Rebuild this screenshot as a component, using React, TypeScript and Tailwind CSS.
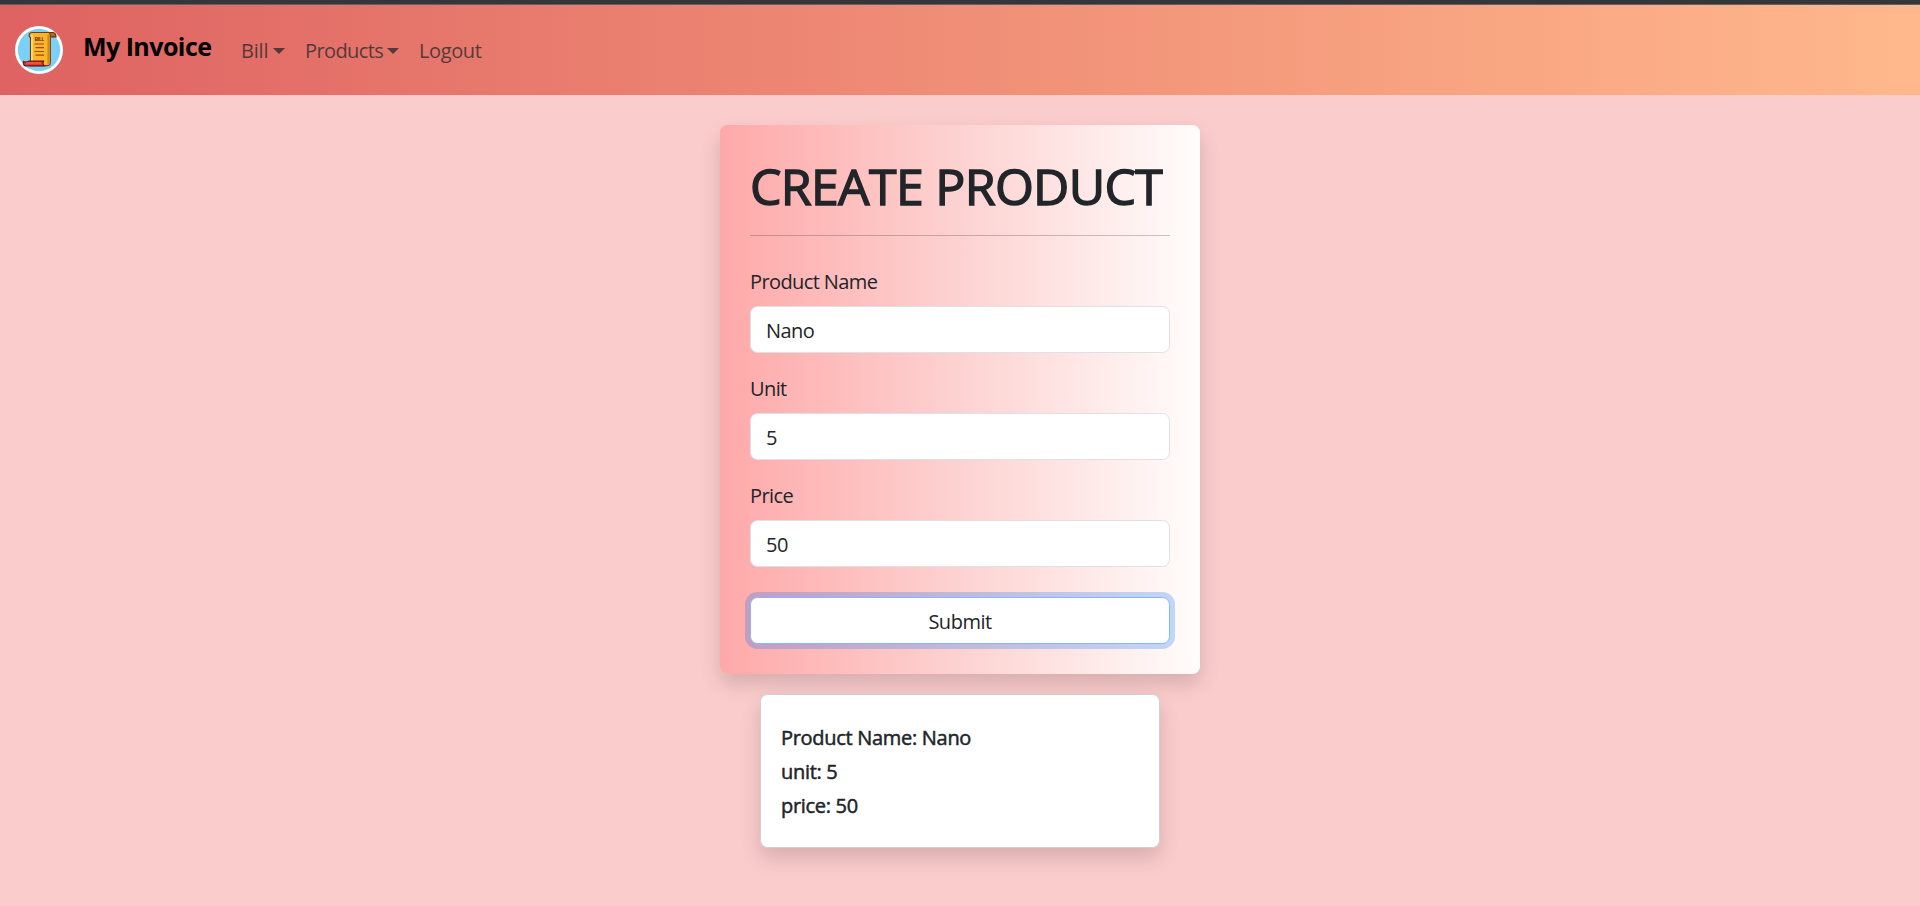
import React from "react";

function Logo() {
  return (
    <svg className="h-12 w-12 shrink-0" viewBox="0 0 48 48">
      <circle cx="24" cy="24" r="24" fill="#ffffff" />
      <circle cx="24" cy="24" r="21.2" fill="#7dd0f5" />
      <path d="M32 6.500H38q3 .4 3 4.300h-6Z" fill="#b06a18" stroke="#6b2a16" strokeWidth="1.200" />
      <path d="M17 6.500h16.500q1.800 0 1.800 3.500V36.500q0 3.200-3 3.200H15.500V11.500q-1.800-.6-1.300-2.800.4-2.200 2.800-2.200Z" fill="#fbb52a" stroke="#7a3a16" strokeWidth="1.200" />
      <path d="M16.200 8.500h1.600v26.500h-1.800Z" fill="#fde07a" />
      <path d="M32.400 8.500h2v27.500q0 2.300-2 2.800Z" fill="#cf8a1c" />
      <path d="M8.500 35.500q2.500 1.300 5.500-.4h14.500q-1.500 2.400.8 4.700H10q-2-1.300-1.500-4.300Z" fill="#e5342f" stroke="#6b1a16" strokeWidth="1.200" />
      <path d="M11 37h15" stroke="#ff6a5b" strokeWidth="1" />
      <text x="24.500" y="14.800" textAnchor="middle" textLength="9.500" className="fill-[#5a2412] font-['Liberation_Sans'] text-[4.500px] leading-none font-bold tracking-normal">BILL</text>
      <path d="M19.500 18h9.500M20.500 21.700h8.500M19.500 25.500h9.500M20.500 29.200h8.500" stroke="#9c4a16" strokeWidth="1.200" />
    </svg>
  );
}

function Caret() {
  return (
    <svg className="h-[6px] w-3" viewBox="0 0 12 6">
      <path d="M0 0h12L6 6Z" fill="currentColor" />
    </svg>
  );
}

function Field({ label, value }: { label: string; value: string }) {
  return (
    <label className="block">
      <span className="block pt-px pb-[9px]">{label}</span>
      <input
        defaultValue={value}
        className="block h-[47px] w-full rounded-[7.5px] border border-[#dee2e6] bg-white px-[15px] pt-0.5 tracking-[-0.55px] outline-none"
      />
    </label>
  );
}

export default function App() {
  return (
    <div className="min-h-[906px] bg-[#fbcccc] font-['Open_Sans','Noto_Sans',sans-serif] text-[20px] leading-[30px] tracking-[-0.6px] text-[#212529]">
      <div className="h-[5px] border-b border-[#5f6164] bg-[#35363a]" />
      <nav className="flex h-[90px] items-center bg-linear-to-r from-[#de6262] to-[#ffb88c] px-[15px]">
        <Logo />
        <a className="mt-[-9px] ml-[20px] w-[158px] text-[25px] font-bold tracking-[-0.55px] whitespace-nowrap text-black">My Invoice</a>
        <div className="flex pt-0.5 text-[#212529]/75">
          <a className="flex w-[64px] items-center gap-[5px] tracking-[-0.2px]">Bill<Caret /></a>
          <a className="flex w-[114px] items-center gap-1">Products<Caret /></a>
          <a className="tracking-[-0.4px]">Logout</a>
        </div>
      </nav>
      <main className="flex flex-col items-center pt-[30px]">
        <form className="w-[480px] rounded-[7.5px] bg-linear-to-r from-[#fea9a9] via-[#fcd2d1] to-[#fffdfc] p-[30px] shadow-[0_10px_20px_rgba(0,0,0,0.15)]">
          <h1 className="pt-0.5 text-[50px] leading-[58px] font-normal tracking-[-0.68px] whitespace-nowrap [-webkit-text-stroke:1.4px_#212529]">CREATE PRODUCT</h1>
          <hr className="mt-5 mb-[30px] border-t border-[#212529]/25" />
          <div className="flex flex-col gap-5">
            <Field label="Product Name" value="Nano" />
            <Field label="Unit" value="5" />
            <Field label="Price" value="50" />
          </div>
          <button
            type="button"
            className="mt-[30px] block h-[47px] w-full rounded-[7.5px] border border-[#86b7fe] bg-white pt-0.5 tracking-[-0.5px] shadow-[0_0_0_5px_rgba(13,110,253,0.25)]"
          >
            Submit
          </button>
        </form>
        <section className="mt-5 h-[154px] w-[400px] rounded-[7.5px] border border-[#d2cfd0] bg-white px-5 pt-[26px] leading-[34px] tracking-[-0.3px] shadow-[0_10px_20px_rgba(0,0,0,0.15)] [-webkit-text-stroke:0.5px_#212529]">
          <p>Product Name: Nano</p>
          <p>unit: 5</p>
          <p>price: 50</p>
        </section>
      </main>
    </div>
  );
}
